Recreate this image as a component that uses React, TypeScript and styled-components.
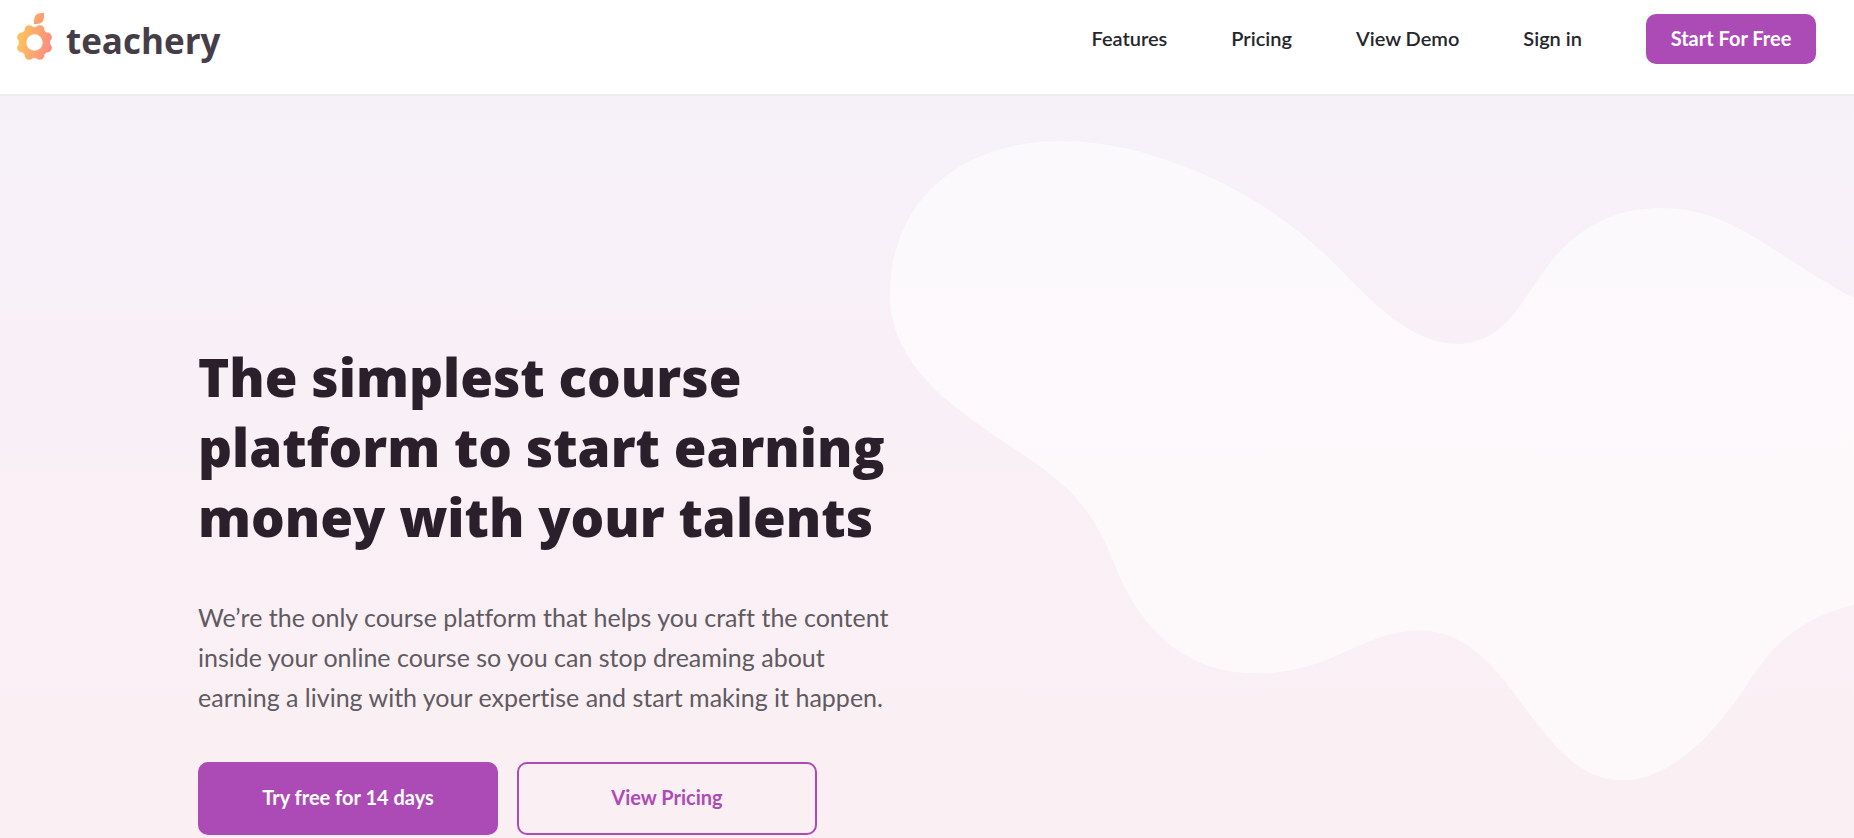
import React from "react";
import styled, { createGlobalStyle } from "styled-components";

const purple = "#ac4bb6";

const GlobalStyle = createGlobalStyle`
  *, *::before, *::after { box-sizing: border-box; }
  html, body, #root { min-height: 100vh; }
  body {
    margin: 0;
    background: #fff;
    color: #26272c;
    font-family: Lato, "Liberation Sans", sans-serif;
    font-variant-ligatures: none;
  }
  #root { display: flex; flex-direction: column; }
`;

const Header = styled.header`
  display: flex;
  align-items: flex-start;
  justify-content: space-between;
  padding: 13px 38px 25px 16px;
  border-bottom: 2px solid #efedf1;
`;

const Brand = styled.a`
  display: flex;
  align-items: flex-start;
  gap: 12px;
  color: #453d47;
  font-family: "Open Sans", "Liberation Sans", sans-serif;
  font-size: 35px;
  font-weight: 700;
  line-height: 56px;
  text-decoration: none;
`;

const Nav = styled.nav`
  display: flex;
  align-items: center;
  gap: 64px;
  padding-top: 1px;
`;

const NavLink = styled.a`
  padding-bottom: 2px;
  color: inherit;
  font-size: 20px;
  font-weight: 600;
  line-height: 48px;
  text-decoration: none;
`;

const Button = styled.button<{ $outline?: boolean; $large?: boolean }>`
  min-width: ${(p) => (p.$large ? "300px" : "170px")};
  height: ${(p) => (p.$large ? "73px" : "50px")};
  padding: 0 16px 3px;
  border: 2px solid ${purple};
  border-radius: 10px;
  background: ${(p) => (p.$outline ? "transparent" : purple)};
  color: ${(p) => (p.$outline ? purple : "#fff")};
  font-family: inherit;
  font-size: 20px;
  font-weight: 700;
  line-height: 24px;
  cursor: pointer;
`;

const Hero = styled.main`
  position: relative;
  flex: 1;
  padding: 246px 32px 4px 198px;
  overflow: hidden;
  background: linear-gradient(#f6f1f9, #f9f0f7 35%, #faf0f3);
`;

const Blob = styled.svg`
  position: absolute;
  top: 0;
  right: 0;
  width: 52%;
`;

const Copy = styled.div`
  position: relative;
  display: flex;
  flex-direction: column;
  gap: 45px;
  max-width: 700px;
`;

const Title = styled.h1`
  margin: 0;
  color: #2a1f2a;
  font-family: "Open Sans", "Liberation Sans", sans-serif;
  font-size: 53px;
  font-weight: 800;
  line-height: 70px;
`;

const Lead = styled.p`
  margin: 0;
  color: #605a61;
  font-size: 25px;
  line-height: 40px;
`;

const Actions = styled.div`
  display: flex;
  flex-wrap: wrap;
  gap: 19px;
`;

const teeth = Array.from({ length: 8 }, (_, i) => {
  const angle = ((i + 0.5) * Math.PI) / 4;
  return { x: 18.5 + 13.8 * Math.cos(angle), y: 29.5 + 13.8 * Math.sin(angle) };
});

function Logo() {
  return (
    <svg width="38" height="48" viewBox="0 0 38 48" aria-hidden="true">
      <defs>
        <linearGradient id="gear" gradientUnits="userSpaceOnUse" x1="1" y1="26" x2="37" y2="33">
          <stop offset="0" stopColor="#fdc45c" />
          <stop offset="1" stopColor="#fb8a82" />
        </linearGradient>
        <linearGradient id="leaf" x1="0" y1="0" x2="1" y2="1">
          <stop offset="0" stopColor="#fcae68" />
          <stop offset="1" stopColor="#fb9474" />
        </linearGradient>
      </defs>
      <g fill="url(#gear)">
        <circle cx="18.5" cy="29.5" r="15.6" />
        {teeth.map((t, i) => (
          <circle key={i} cx={t.x} cy={t.y} r="4.6" />
        ))}
      </g>
      <circle cx="18.5" cy="29.5" r="8.2" fill="#fff" />
      <path d="M18 11V7.500Q18 0 25.500 0H28V3.500Q28 11 20.500 11Z" fill="url(#leaf)" />
    </svg>
  );
}

export default function App() {
  return (
    <>
      <GlobalStyle />
      <Header>
        <Brand href="#">
          <Logo />
          teachery
        </Brand>
        <Nav>
          <NavLink href="#features">Features</NavLink>
          <NavLink href="#pricing">Pricing</NavLink>
          <NavLink href="#demo">View Demo</NavLink>
          <NavLink href="#signin">Sign in</NavLink>
          <Button type="button">Start For Free</Button>
        </Nav>
      </Header>
      <Hero>
        <Blob viewBox="889 96 965 742" aria-hidden="true">
          <path
            fill="#fff"
            fillOpacity="0.6"
            d="M889 295C889 200 960 141 1061 141C1150 141 1262 190 1334 264C1375 306 1412 344 1457 344C1500 344 1518 308 1540 276C1565 240 1600 208 1661 208C1735 208 1775 258 1854 298V605C1800 620 1775 642 1749 682C1715 734 1670 781 1623 781C1580 781 1555 748 1528 713C1500 675 1470 631 1419 631C1363 631 1330 674 1257 674C1180 674 1140 625 1118 575C1105 545 1095 510 1050 475C990 428 889 385 889 295Z"
          />
        </Blob>
        <Copy>
          <Title>The simplest course platform to start earning money with your talents</Title>
          <Lead>
            We’re the only course platform that helps you craft the content inside your online course
            so you can stop dreaming about earning a living with your expertise and start making it
            happen.
          </Lead>
          <Actions>
            <Button type="button" $large>Try free for 14 days</Button>
            <Button type="button" $large $outline>View Pricing</Button>
          </Actions>
        </Copy>
      </Hero>
    </>
  );
}
